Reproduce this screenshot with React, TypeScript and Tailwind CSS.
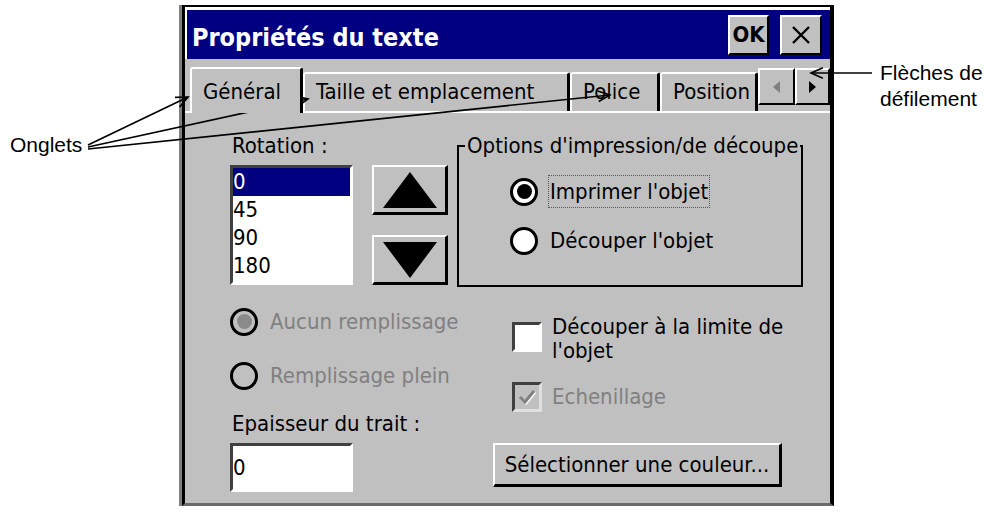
import React from "react";

const raised =
  "border-2 border-t-white border-l-white border-r-black border-b-black bg-[#c0c0c0]";
const sunken =
  "border-[3px] border-t-[#404040] border-l-[#404040] border-r-white border-b-white bg-white";

type Pt = { x1: number; y1: number; x2: number; y2: number };

const Arrow = ({ x1, y1, x2, y2 }: Pt) => {
  const a = Math.atan2(y1 - y2, x1 - x2);
  const len = 13;
  const s = 0.42;
  const p1 = `${x2 + len * Math.cos(a + s)},${y2 + len * Math.sin(a + s)}`;
  const p2 = `${x2 + len * Math.cos(a - s)},${y2 + len * Math.sin(a - s)}`;
  return (
    <g stroke="#000" strokeWidth={1.6} fill="none">
      <line x1={x1} y1={y1} x2={x2} y2={y2} />
      <polyline points={`${p1} ${x2},${y2} ${p2}`} />
    </g>
  );
};

const Radio = ({
  checked,
  disabled,
}: {
  checked?: boolean;
  disabled?: boolean;
}) => (
  <div
    className={`w-[28px] h-[28px] shrink-0 rounded-full border-[3px] border-black flex items-center justify-center ${
      disabled ? "bg-[#c0c0c0]" : "bg-white"
    }`}
  >
    {checked && (
      <div
        className={`w-[15px] h-[15px] rounded-full ${
          disabled ? "bg-[#8a8a8a]" : "bg-black"
        }`}
      />
    )}
  </div>
);

const Tab = ({
  label,
  width,
  active,
}: {
  label: string;
  width: string;
  active?: boolean;
}) => (
  <div
    className={`${width} shrink-0 overflow-hidden whitespace-nowrap rounded-t-[3px] border-t-2 border-l-2 border-r-[3px] border-t-white border-l-white border-r-black bg-[#c0c0c0] pl-[11px] leading-[26px] ${
      active ? "h-[46px] -mb-[2px] z-10 pt-[10px]" : "h-[39px] pt-[5px]"
    }`}
  >
    {label}
  </div>
);

export default function App() {
  return (
    <div className="relative w-[993px] h-[512px] bg-white overflow-hidden flex">
      {/* annotation left */}
      <div className="w-[179px] shrink-0 pt-[133px] pl-[10px] font-['Liberation_Sans',Arial,sans-serif] text-[21px] leading-[24px] text-black">
        Onglets
      </div>

      {/* dialog */}
      <div className="mt-[5px] w-[655px] h-[501px] shrink-0 border-l-[3px] border-l-[#808080]">
        <div className="h-full flex flex-col border-l-[3px] border-t-2 border-r-4 border-b-[3px] border-l-black border-t-black border-r-black border-b-[#6a6a6a] bg-[#c0c0c0] font-['DejaVu_Sans_Condensed','Liberation_Sans',sans-serif] text-[22px] leading-[26px] text-black">
          {/* title */}
          <div className="pt-[3px] pl-[2px] bg-white">
            <div className="h-[49px] bg-[#000080] flex items-start pt-[5px] pl-[5px] pr-[8px]">
              <span className="flex-1 mt-[8px] text-white font-bold text-[25px] leading-[30px]">
                Propriétés du texte
              </span>
              <div
                className={`${raised} w-[41px] h-[40px] flex items-center justify-center font-bold text-[22px] leading-none`}
              >
                OK
              </div>
              <div
                className={`${raised} ml-[11px] w-[42px] h-[40px] flex items-center justify-center`}
              >
                <svg width="18" height="18" viewBox="0 0 18 18">
                  <path d="M1 1 L17 17 M17 1 L1 17" stroke="#000" strokeWidth="2.4" />
                </svg>
              </div>
            </div>
          </div>
          <div className="h-px" />

          {/* tabs */}
          <div className="h-[53px] flex items-end pl-[5px] border-b-2 border-white">
            <Tab label="Général" width="w-[113px]" active />
            <Tab label="Taille et emplacement" width="w-[267px]" />
            <Tab label="Police" width="w-[90px]" />
            <Tab label="Position" width="w-[98px]" />
            <div className="self-start mt-[8px] flex">
              <div className={`${raised} w-[37px] h-[37px] flex items-center justify-center`}>
                <svg width="7" height="12" viewBox="0 0 7 12">
                  <polygon points="7,0 0,6 7,12" fill="#808080" />
                </svg>
              </div>
              <div className={`${raised} w-[35px] h-[37px] flex items-center justify-center`}>
                <svg width="7" height="12" viewBox="0 0 7 12">
                  <polygon points="0,0 7,6 0,12" fill="#000" />
                </svg>
              </div>
            </div>
          </div>

          {/* content */}
          <div className="flex-1 pl-[45px] pt-[20px]">
            <div className="flex items-start">
              <div>
                <div className="pl-[2px]">Rotation :</div>
                <div className="mt-[6px] flex">
                  <div className={`${sunken} w-[123px] h-[120px] leading-[28px]`}>
                    <div className="bg-[#000080] text-white">0</div>
                    <div>45</div>
                    <div>90</div>
                    <div>180</div>
                  </div>
                  <div className="ml-[19px] flex flex-col gap-[20px]">
                    <div className={`${raised} border-r-[3px] border-b-[3px] w-[76px] h-[50px] flex items-center justify-center`}>
                      <svg width="54" height="36" viewBox="0 0 54 36">
                        <polygon points="27,0 54,36 0,36" fill="#000" />
                      </svg>
                    </div>
                    <div className={`${raised} border-r-[3px] border-b-[3px] w-[76px] h-[50px] flex items-center justify-center`}>
                      <svg width="54" height="36" viewBox="0 0 54 36">
                        <polygon points="0,0 54,0 27,36" fill="#000" />
                      </svg>
                    </div>
                  </div>
                </div>
              </div>

              <fieldset className="ml-[9px] w-[346px] min-w-0 border-2 border-black p-0">
                <legend className="ml-[6px] px-[2px] whitespace-nowrap">
                  Options d'impression/de découpe
                </legend>
                <div className="pl-[51px] pt-[16px] pb-[28px]">
                  <div className="flex items-center h-[33px]">
                    <Radio checked />
                    <span className="ml-[10px] h-[33px] flex items-center px-[1px] border border-dotted border-[#555]">
                      Imprimer l'objet
                    </span>
                  </div>
                  <div className="flex items-center h-[33px] mt-[16px]">
                    <Radio />
                    <span className="ml-[11px] px-[1px]">Découper l'objet</span>
                  </div>
                </div>
              </fieldset>
            </div>

            <div className="flex mt-[18px]">
              <div className="w-[263px] shrink-0">
                <div className="flex items-center h-[33px] text-[#808080]">
                  <Radio checked disabled />
                  <span className="ml-[12px]">Aucun remplissage</span>
                </div>
                <div className="flex items-center h-[33px] mt-[21px] text-[#808080]">
                  <Radio disabled />
                  <span className="ml-[12px]">Remplissage plein</span>
                </div>
                <div className="mt-[19px] pl-[2px]">Epaisseur du trait :</div>
                <div className={`${sunken} mt-[6px] w-[123px] h-[49px] flex items-center`}>
                  0
                </div>
              </div>

              <div className="pt-[10px]">
                <div className="flex items-start ml-[19px]">
                  <div className={`${sunken} border-t-[#222] border-l-[#222] border-r-[#d8d8d8] border-b-[#d8d8d8] mt-[7px] w-[30px] h-[30px] shrink-0`} />
                  <div className="ml-[10px] leading-[24px]">
                    Découper à la limite de
                    <br />
                    l'objet
                  </div>
                </div>
                <div className="flex items-center ml-[19px] mt-[19px] h-[30px]">
                  <div className="w-[30px] h-[30px] shrink-0 border-[3px] border-t-[#404040] border-l-[#404040] border-r-[#e0e0e0] border-b-[#e0e0e0] bg-[#c0c0c0] flex items-center justify-center">
                    <svg width="20" height="18" viewBox="0 0 20 18">
                      <polyline points="3,9 8,14 17,3" fill="none" stroke="#fff" strokeWidth="3" transform="translate(1,1)" />
                      <polyline points="3,9 8,14 17,3" fill="none" stroke="#808080" strokeWidth="3" />
                    </svg>
                  </div>
                  <span className="ml-[10px] text-[#808080]">Echenillage</span>
                </div>
                <div
                  className={`${raised} border-r-[3px] border-b-[3px] mt-[31px] w-[289px] h-[44px] flex items-center justify-center whitespace-nowrap`}
                >
                  Sélectionner une couleur...
                </div>
              </div>
            </div>
          </div>
        </div>
      </div>

      {/* annotation right */}
      <div className="pl-[46px] pt-[60px] font-['Liberation_Sans',Arial,sans-serif] text-[21px] leading-[26px] text-black whitespace-nowrap">
        Flèches de
        <br />
        défilement
      </div>

      <svg className="absolute inset-0 pointer-events-none" width="993" height="512">
        <Arrow x1={88} y1={145} x2={188} y2={97} />
        <Arrow x1={88} y1={147} x2={308} y2={99} />
        <Arrow x1={88} y1={149} x2={610} y2={95} />
        <Arrow x1={872} y1={73} x2={811} y2={73} />
      </svg>
    </div>
  );
}
